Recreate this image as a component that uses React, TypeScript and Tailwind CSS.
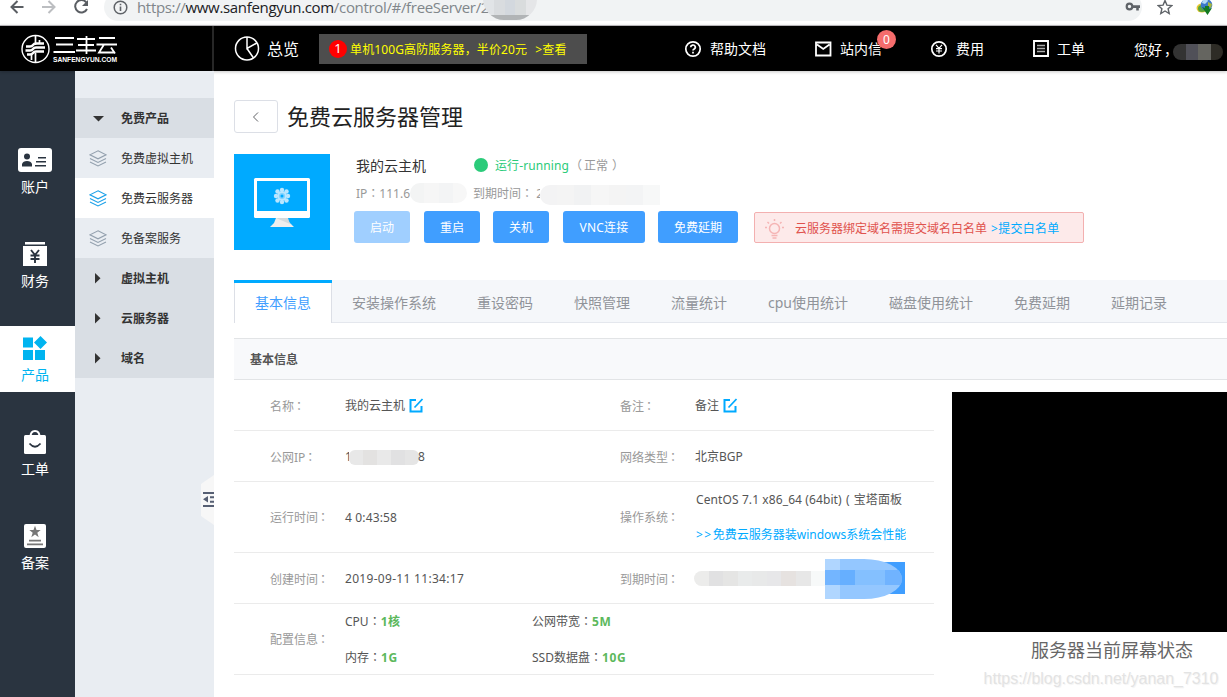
import React from "react";

const Colon = () => <span className="font-['Noto_Sans_CJK_TC',sans-serif]">：</span>;

const Mosaic = ({ cells, className }: { cells: string[]; className: string }) => (
  <span className={"flex overflow-hidden shrink-0 " + className}>
    {cells.map((c, i) => (
      <span key={i} className={"h-full flex-1 " + c} />
    ))}
  </span>
);

function BrowserBar() {
  return (
    <div className="h-[25px] overflow-hidden bg-white flex shrink-0">
      <svg className="w-[104px] h-[25px] shrink-0" viewBox="0 0 104 25" fill="none" strokeWidth="2">
        <path d="M23.500 7H12M17.500 1 11.500 7l6 6" stroke="#5a5e63" />
        <path d="M42 7h12M48.500 1l6 6-6 6" stroke="#bcbec1" />
        <path d="M86.300 2.500A6.200 6.200 0 1 0 87 9" stroke="#5a5e63" />
        <path d="M88 0v6h-6z" fill="#5a5e63" />
      </svg>
      <div className="-mt-[7px] h-[28px] w-[1038px] shrink-0 rounded-full bg-[#f1f3f4] flex items-center relative">
        <svg className="ml-[9px] w-[15px] h-[15px] shrink-0" viewBox="0 0 15 15" fill="none">
          <circle cx="7.500" cy="7.500" r="6.300" stroke="#5f6368" strokeWidth="1.500" />
          <path d="M7.500 6.500v4.500M7.500 3.800v1.500" stroke="#5f6368" strokeWidth="1.600" />
        </svg>
        <span className="ml-[9px] -mt-[1px] font-['Open_Sans',sans-serif] text-[15px] leading-[20px] tracking-[-0.33px] whitespace-nowrap text-[#80868b]">
          https://<span className="text-[#202124]">www.sanfengyun.com</span>/control/#/freeServer/2
        </span>
        <div className="absolute left-[379px] top-[6px] h-[21px] w-[54px] rounded-b-full overflow-hidden flex flex-col">
          <Mosaic className="h-[16px]" cells={["bg-[#e1e4e7]", "bg-[#d9dcdf]", "bg-[#d3d8de]", "bg-[#d9dcdd]", "bg-[#e5e6e8]"]} />
          <span className="h-[5px] bg-[#b1b4b6]" />
        </div>
      </div>
      <div className="-ml-[18px] w-[103px] shrink-0 relative">
        <svg className="absolute left-[1px] -top-[1px] w-[16px] h-[16px]" viewBox="0 0 16 16">
          <circle cx="4.500" cy="7.500" r="2.800" fill="none" stroke="#5f6368" strokeWidth="2.200" />
          <path d="M7 6.300h8v2.600h-1.200v2.600h-2.600V8.900H7z" fill="#5f6368" />
        </svg>
        <svg className="absolute left-[33px] -top-[1px] w-[16px] h-[16px]" viewBox="0 0 16 16">
          <path d="M8 1.500l1.900 4.600 4.900.4-3.700 3.200 1.100 4.800L8 12l-4.200 2.500 1.100-4.800L1.200 6.500l4.900-.4z" fill="none" stroke="#5f6368" strokeWidth="1.400" />
        </svg>
        <svg className="absolute left-[72px] -top-[1px] w-[18px] h-[18px]" viewBox="0 0 18 18">
          <ellipse cx="6" cy="9" rx="5.500" ry="4.500" fill="#e8c832" />
          <ellipse cx="6" cy="9.500" rx="4" ry="3.500" fill="#5aa53a" />
          <circle cx="10.500" cy="6" r="5.800" fill="#3b78c9" />
          <path d="M7 1q4-2 5 1l-3 3-3-1z" fill="#b5d9f4" />
          <path d="M12 3l4 2-1 4-3-2z" fill="#a8b73c" />
          <path d="M6 8l3 1V7h4v3l3-1-4.500 7z" fill="#147a22" />
        </svg>
      </div>
    </div>
  );
}

function Logo() {
  return (
    <svg className="ml-[20px] w-[99px] h-[32px]" viewBox="0 0 99 32" fill="none" stroke="#fff">
      <circle cx="15.500" cy="16" r="13.500" strokeWidth="1.400" />
      <path d="M15.500 3v9M19.500 7v3M11.500 22v5M15.500 20v9" strokeWidth="1.700" />
      <path d="M6 13.500h4q2 0 3-1.500t3-1.500h8M5.500 17.500H10q2 0 3-1.500t3-1.500h9M7 21.500h3q2 0 3-1.500t3-1.500h8" strokeWidth="2.300" />
      <path d="M35 5h19M36 11.500h17M33.500 19h21.500M57 6h18M58 12h16M56 17.500h20M66.500 3v18M79 5h16M76.500 11.500h20.500M84 11.500l-5 8h16M91 14.500l4 6" strokeWidth="1.800" />
      <text x="33" y="29" textLength="64" lengthAdjust="spacingAndGlyphs" fill="#fff" stroke="none" className="font-['Liberation_Sans',sans-serif] text-[7px] font-bold">SANFENGYUN.COM</text>
    </svg>
  );
}

function Header() {
  return (
    <header className="h-[46px] shrink-0 border-t border-[#b5b3b7] bg-black text-white flex items-center whitespace-nowrap shadow-[0_1px_3px_rgba(0,0,0,0.22)] relative text-[14px]">
      <div className="w-[214px] h-full border-r-2 border-[#272727] flex items-center shrink-0">
        <Logo />
      </div>
      <svg className="ml-[20px] w-[26px] h-[26px] shrink-0" viewBox="0 0 26 26" fill="none" stroke="#fff" strokeWidth="1.500">
        <circle cx="13" cy="12.500" r="11.500" />
        <path d="M13 1v11.500l9.800-5.500M13 12.500l6.500 9.500" />
      </svg>
      <span className="ml-[7px] text-[16px]">总览</span>
      <div className="ml-[20px] w-[268px] h-[30px] bg-[#4d4d4d] flex items-center text-[12px] text-[#ff0] shrink-0">
        <span className="ml-[10px] mr-[3px] size-[18px] rounded-full bg-[#f00] text-white flex items-center justify-center text-[13px]">1</span>
        <span className="mt-[2px] tracking-[0.12px]">单机100G高防服务器，半价20元</span>
        <span className="ml-[8px] mt-[2px] tracking-[0.3px]">&gt;查看</span>
      </div>
      <svg className="ml-[97px] w-[18px] h-[18px] shrink-0" viewBox="0 0 18 18" fill="none" stroke="#fff" strokeWidth="1.700">
        <circle cx="9" cy="9" r="7.200" />
        <path d="M6.700 7.200a2.300 2.100 0 1 1 3.500 1.700Q9 9.600 9 10.500M9 11.800v1.600" />
      </svg>
      <span className="ml-[8px] w-[56px]">帮助文档</span>
      <svg className="ml-[49px] w-[17px] h-[16px] shrink-0" viewBox="0 0 17 16" fill="none" stroke="#fff" strokeWidth="1.800">
        <path d="M1 1.500h14.500v13H1zM2 3.500l6.250 4.500 6.250-4.500" />
      </svg>
      <span className="ml-[8px] w-[42px] relative">
        站内信
        <span className="absolute left-[37px] -top-[8px] size-[19px] rounded-full bg-[#f56c6c] text-[12px] leading-[19px] text-center">0</span>
      </span>
      <svg className="ml-[48px] w-[18px] h-[18px] shrink-0" viewBox="0 0 18 18" fill="none" stroke="#fff" strokeWidth="1.700">
        <circle cx="9" cy="9" r="7.200" />
        <path d="M6 4.800l3 3.500 3-3.500M9 8v5.500M6 8.700h6M6 11h6" strokeWidth="1.200" />
      </svg>
      <span className="ml-[8px] w-[28px]">费用</span>
      <svg className="ml-[49px] w-[16px] h-[17px] shrink-0" viewBox="0 0 16 17" fill="none" stroke="#fff">
        <path d="M1 1h14v15H1z" strokeWidth="1.900" />
        <path d="M4 5.500h8M4 8.500h8M4 11.500h8" strokeWidth="1.300" stroke="#aaa" />
      </svg>
      <span className="ml-[8px] w-[28px]">工单</span>
      <span className="ml-[49px] w-[40px] mt-[1px]">您好<span className="relative left-[2px]">，</span></span>
      <Mosaic className="-ml-[1px] mt-[6px] h-[16px] w-[50px] rounded-full" cells={["bg-[#333]", "bg-[#505058]", "bg-[#656560]", "bg-[#2e2c26]"]} />
    </header>
  );
}

const iconAccount = (
  <svg className="w-[34px] h-[24px]" viewBox="0 0 34 24">
    <rect width="34" height="24" rx="3" fill="#fff" />
    <circle cx="9" cy="8.500" r="3" fill="#2a3440" />
    <path d="M4 18.500v-2.500q1-3 5-3t5 3v2.500zM20 9h8v1.600h-8zM18 13h10v1.600H18zM17 17h11v1.600H17z" fill="#2a3440" />
  </svg>
);
const iconFinance = (
  <svg className="w-[24px] h-[24px]" viewBox="0 0 24 24">
    <path d="M2 0h20v2.500H2zM0 4h24v20H0z" fill="#fff" />
    <path d="M8 8l4 5 4-5M12 13v8M7.500 13.500h9M7.500 17h9" stroke="#2a3440" strokeWidth="1.900" fill="none" />
  </svg>
);
const iconProduct = (
  <svg className="w-[24px] h-[24px]" viewBox="0 0 24 24" fill="#00b4f0">
    <path d="M0 1.500h10v10H0zM0 14h10v10H0zM12 14h10v10H12zM17.500 0L24 6.500 17.500 13 11 6.500z" />
  </svg>
);
const iconOrder = (
  <svg className="w-[22px] h-[24px]" viewBox="0 0 22 24" fill="none">
    <path d="M6.500 7q0-6 4.500-6t4.500 6" stroke="#fff" strokeWidth="2" />
    <rect y="5" width="22" height="19" rx="1.500" fill="#fff" />
    <path d="M5.500 13.500q5.500 6.500 11 0" stroke="#2a3440" strokeWidth="1.800" />
  </svg>
);
const iconRecord = (
  <svg className="w-[22px] h-[24px]" viewBox="0 0 22 24" fill="#777">
    <rect width="22" height="24" rx="2" fill="#fff" />
    <path d="M11 1.800l1.500 4.300h4.200L13.300 8.800l1.400 4.500L11 10.600l-3.700 2.700 1.400-4.500-3.400-2.700h4.200zM5 15.800h12v1.700H5zM3 19.500h16v1.700H3z" />
  </svg>
);

const mainNav = [
  { label: "账户", icon: iconAccount, active: false },
  { label: "财务", icon: iconFinance, active: false },
  { label: "产品", icon: iconProduct, active: true },
  { label: "工单", icon: iconOrder, active: false },
  { label: "备案", icon: iconRecord, active: false },
];

function MainNav() {
  return (
    <nav className="w-[75px] shrink-0 bg-[#2a3440] pt-[67px] flex flex-col gap-[28px] text-[14px]">
      {mainNav.map((n) => (
        <div key={n.label} className={"h-[66px] shrink-0 pr-[5px] pt-[10px] flex flex-col items-center " + (n.active ? "bg-white text-[#00b4f0]" : "text-white")}>
          {n.icon}
          <span className="mt-[5px] leading-[20px]">{n.label}</span>
        </div>
      ))}
    </nav>
  );
}

const Layers = ({ color }: { color: string }) => (
  <svg className="w-[18px] h-[17px]" viewBox="0 0 18 17" fill="none" stroke={color} strokeWidth="1.100">
    <path d="M9 .8l8 4-8 4-8-4zM1 8.500l8 4 8-4M1 12l8 4 8-4" />
  </svg>
);

const subNav = [
  { label: "免费产品", kind: "down" },
  { label: "免费虚拟主机", kind: "item" },
  { label: "免费云服务器", kind: "active" },
  { label: "免备案服务", kind: "item" },
  { label: "虚拟主机", kind: "right" },
  { label: "云服务器", kind: "right" },
  { label: "域名", kind: "right" },
];

function SubNav() {
  return (
    <nav className="w-[139px] shrink-0 bg-[#e9edf2] pt-[27px] flex flex-col text-[12px] text-[#333] relative">
      {subNav.map((s) => (
        <div
          key={s.label}
          className={
            "h-[40px] flex items-center whitespace-nowrap " +
            (s.kind === "active" ? "bg-white" : s.kind === "item" ? "" : "bg-[#d9dee4] font-bold")
          }
        >
          <span className="w-[46px] pl-[14px] flex">
            {s.kind === "item" && <Layers color="#93a0ae" />}
            {s.kind === "active" && <Layers color="#1ba0e8" />}
            {s.kind === "down" && (
              <svg className="w-[18px] h-[16px]" viewBox="0 0 18 16"><path d="M4 6h11L9.500 11.500z" fill="#333" /></svg>
            )}
            {s.kind === "right" && (
              <svg className="w-[18px] h-[16px]" viewBox="0 0 18 16"><path d="M6 3v10.500l5.500-5.250z" fill="#333" /></svg>
            )}
          </span>
          <span className="mt-[2px]">{s.label}</span>
        </div>
      ))}
      <svg className="absolute right-0 top-[403px] w-[13px] h-[52px]" viewBox="0 0 13 52">
        <path d="M13 1v50L0 42V10z" fill="#f7f7f7" />
        <path d="M2 18h11v2H2zM2 31h11v2H2zM9 22.300h4v2H9zM9 26.700h4v2H9zM7 22v6.500L2 25.300z" fill="#565f73" />
      </svg>
    </nav>
  );
}

const ServerImage = () => (
  <svg className="w-[96px] h-[96px] shrink-0 bg-[#0af]" viewBox="0 0 96 96">
    <rect x="20" y="24" width="56" height="40" rx="1.500" fill="#fff" />
    <path d="M23 27h50v30H23z" fill="#0af" />
    <path d="M42 64h12v3l3 3 3 3H36l4-4z" fill="#eee" />
    <path d="M42 64h12l2 6z" fill="#d5dadd" />
    <g fill="#b9e6ff">
      <circle cx="48" cy="36" r="2.200" /><circle cx="48" cy="48" r="2.200" />
      <circle cx="42" cy="42" r="2.200" /><circle cx="54" cy="42" r="2.200" />
      <circle cx="43.500" cy="37.500" r="2.200" /><circle cx="52.500" cy="37.500" r="2.200" />
      <circle cx="43.500" cy="46.500" r="2.200" /><circle cx="52.500" cy="46.500" r="2.200" />
      <circle cx="48" cy="42" r="4.800" />
    </g>
    <circle cx="48" cy="42" r="3" fill="#7fd2ff" />
    <circle cx="48" cy="42" r="1.500" fill="#0af" />
  </svg>
);

const btn = "h-[32px] rounded-[3px] text-white flex items-center justify-center shrink-0 pt-[2px] ";

function ServerSummary() {
  return (
    <div className="mt-[21px] h-[96px] flex">
      <ServerImage />
      <div className="ml-[24px] flex flex-col whitespace-nowrap">
        <div className="h-[22px] flex items-center text-[14px] text-[#333]">
          <span className="pl-[2px] w-[120px]">我的云主机</span>
          <span className="size-[14px] rounded-full bg-[#2bcb7a]" />
          <span className="ml-[7px] mt-[2px] text-[12px] tracking-[0.1px] text-[#2bcb7a]">运行-running</span>
          <span className="ml-[3px] mt-[2px] text-[12px] text-[#999]"><span className="relative -left-[2px]">（</span>正常<span className="relative left-[4px]">）</span></span>
        </div>
        <div className="mt-[1px] h-[32px] flex items-center text-[12px] text-[#999]">
          <span className="ml-[2px] mt-px w-[54px] overflow-hidden">IP<Colon />111.6</span>
          <Mosaic className="-mt-[1px] h-[20px] w-[57px] rounded-full" cells={["bg-[#f3f4f4]", "bg-[#f6f6f6]", "bg-[#f3f4f5]", "bg-[#f7f7f7]"]} />
          <span className="ml-[6px] mt-px w-[67px] overflow-hidden">到期时间<Colon />&nbsp;2</span>
          <Mosaic className="mt-[4px] h-[20px] w-[120px] rounded-l-full" cells={["bg-[#f3f3f4]", "bg-[#f4f4f4]", "bg-[#f1f2f3]", "bg-[#f6f6f6]", "bg-[#f4f4f4]", "bg-[#f3f4f5]", "bg-[#f7f8f8]"]} />
        </div>
        <div className="mt-[2px] h-[32px] flex items-center text-[12px]">
          <button className={btn + "w-[56px] bg-[#a0cfff]"}>启动</button>
          <button className={btn + "ml-[14px] w-[56px] bg-[#409eff]"}>重启</button>
          <button className={btn + "ml-[13px] w-[56px] bg-[#409eff]"}>关机</button>
          <button className={btn + "ml-[14px] w-[82px] bg-[#409eff] tracking-[0.2px]"}>VNC连接</button>
          <button className={btn + "ml-[13px] w-[80px] bg-[#409eff]"}>免费延期</button>
          <div className="ml-[16px] mt-[1px] w-[330px] h-[31px] rounded-[2px] border border-[#f3b0b0] bg-[#fdeaea] flex items-center text-[#e0524d]">
            <svg className="ml-[10px] mt-[3px] w-[20px] h-[20px]" viewBox="0 0 20 20" fill="none" stroke="#f5b5b5" strokeWidth="1.500">
              <circle cx="9.500" cy="9.500" r="5" />
              <path d="M9.500 0v2M2.500 3l1.500 1.500M16.500 3L15 4.500M0 8.500h2M17 8.500h2M6.500 16.500h6M7.500 19h4" />
            </svg>
            <span className="ml-[10px] mt-[2px]">云服务器绑定域名需提交域名白名单</span>
            <span className="ml-[4px] mt-[2px] text-[#0af] tracking-[0.25px]">&gt;提交白名单</span>
          </div>
        </div>
      </div>
    </div>
  );
}

const tabs = ["安装操作系统", "重设密码", "快照管理", "流量统计", "cpu使用统计", "磁盘使用统计", "免费延期", "延期记录"];

function Tabs() {
  return (
    <div className="mt-[30px] h-[43px] bg-[#f5f7fa] border-b border-[#e4e7ed] flex text-[14px] text-[#909399] whitespace-nowrap">
      <div className="w-[98px] h-[43px] shrink-0 bg-white border-x border-[#dcdfe6] flex">
        <div className="-mx-px pb-[2px] flex-1 border-t-3 border-[#0af] text-[#409eff] flex items-center justify-center">基本信息</div>
      </div>
      <div className="ml-[20px] mt-[2px] flex items-center gap-[41px]">
        {tabs.map((t) => (
          <span key={t}>{t}</span>
        ))}
      </div>
    </div>
  );
}

const EditIcon = () => (
  <svg className="ml-[4px] w-[15px] h-[15px] inline-block -mt-[2px]" viewBox="0 0 15 15" fill="none" stroke="#0af" strokeWidth="2">
    <path d="M7 2H1.500v11.500h11V8" />
    <path d="M5.500 9.500L13.500 1" strokeWidth="1.800" />
  </svg>
);

const Row = ({ tall, children }: { tall?: boolean; children: React.ReactNode }) => (
  <div className={"border-b border-[#ebebeb] flex items-center whitespace-nowrap " + (tall ? "h-[71px]" : "h-[51px] pt-[2px]")}>{children}</div>
);
const Label = ({ first, text }: { first?: boolean; text: string }) => (
  <span className={"shrink-0 text-[#999] " + (first ? "ml-[36px] w-[75px]" : "w-[76px]")}>{text}<span className="relative -left-[1px]"><Colon /></span></span>
);
const Green = ({ children }: { children: React.ReactNode }) => <b className="text-[#5cb85c] tracking-[0.6px]">{children}</b>;

function Details() {
  return (
    <div className="w-[700px] shrink-0 text-[12px] text-[#555]">
      <Row>
        <Label first text="名称" />
        <span className="w-[275px] flex items-center">我的云主机<EditIcon /></span>
        <Label text="备注" />
        <span className="-ml-px flex items-center">备注<EditIcon /></span>
      </Row>
      <Row>
        <Label first text="公网IP" />
        <span className="w-[275px] flex items-center">
          <span className="w-[4px] overflow-hidden">1</span>
          <Mosaic className="h-[15px] w-[70px] rounded-[6px]" cells={["bg-[#e8e8e8]", "bg-[#e3e2e1]", "bg-[#e9e9e9]", "bg-[#e1e1e2]", "bg-[#e5e5e5]"]} />
          <span className="-ml-[1px]">8</span>
        </span>
        <Label text="网络类型" />
        <span className="-ml-px">北京BGP</span>
      </Row>
      <Row tall>
        <Label first text="运行时间" />
        <span className="w-[275px] mt-px tracking-[0.15px]">4 0:43:58</span>
        <Label text="操作系统" />
        <span className="w-[210px] flex flex-col overflow-hidden leading-[35px]">
          <span className="tracking-[0.1px] -mt-px mb-px">CentOS 7.1 x86_64 (64bit)<span className="inline-block w-[12px] text-center font-['Noto_Sans',sans-serif]">(</span>宝塔面板</span>
          <span className="-mt-px text-[#0af]"><span className="tracking-[1.500px]">&gt;&gt;</span>免费云服务器装windows系统会性能</span>
        </span>
      </Row>
      <Row>
        <Label first text="创建时间" />
        <span className="w-[275px] tracking-[0.300px]">2019-09-11 11:34:17</span>
        <Label text="到期时间" />
        <Mosaic className="-ml-[2px] -mt-[2px] h-[15px] w-[131px] rounded-l-full" cells={["bg-[#ececeb]", "bg-[#e1e1e2]", "bg-[#e5e5e4]", "bg-[#e9ebeb]", "bg-[#e8e9e9]", "bg-[#e7e7e9]", "bg-[#e6e2e0]", "bg-[#e7e7e7]", "bg-[#f7f9f9]"]} />
        <span className="relative w-[80px] h-[40px] flex items-center justify-end">
          <span className="mb-[2px] w-[40px] h-[32px] bg-[#409eff]" />
          <span className="absolute left-0 top-0 w-[77px] h-[40px] rounded-r-[38px_20px] overflow-hidden bg-[#94c7ff] flex">
            <span className="w-[15px] bg-[#b0d6ff]" />
            <span className="absolute left-0 top-[11px] flex w-full h-[15px]">
              <span className="w-[15px] bg-[#73b5ff]" />
              <span className="w-[15px] bg-[#66afff]" />
              <span className="w-[30px] bg-[#84c0ff]" />
              <span className="flex-1 bg-[#70b3ff]" />
            </span>
          </span>
        </span>
      </Row>
      <Row tall>
        <Label first text="配置信息" />
        <span className="-mt-[1px] grid grid-cols-[187px_1fr] leading-[35px]">
          <span>CPU<Colon /><Green>1核</Green></span>
          <span>公网带宽<Colon /><Green>5M</Green></span>
          <span>内存<Colon /><Green>1G</Green></span>
          <span>SSD数据盘<Colon /><Green>10G</Green></span>
        </span>
      </Row>
    </div>
  );
}

export default function App() {
  return (
    <div className="w-[1227px] h-[697px] overflow-hidden flex flex-col bg-white font-['Noto_Sans','Noto_Sans_CJK_SC',sans-serif]">
      <BrowserBar />
      <Header />
      <div className="flex flex-1 min-h-0">
        <MainNav />
        <SubNav />
        <main className="flex-1 min-w-0 pl-[20px] pt-[29px] flex flex-col">
          <div className="h-[33px] shrink-0 flex items-center">
            <button className="w-[44px] h-[33px] rounded-[3px] border border-[#dcdfe6] flex items-center justify-center">
              <svg className="w-[8px] h-[12px]" viewBox="0 0 8 12" fill="none" stroke="#606266"><path d="M6 1.500L1.500 6 6 10.500" /></svg>
            </button>
            <h1 className="ml-[9px] text-[22px] text-[#222] whitespace-nowrap">免费云服务器管理</h1>
          </div>
          <ServerSummary />
          <Tabs />
          <div className="mt-[15px] h-[42px] shrink-0 border-y border-[#e2e4e6] bg-[#f8f9fb] pl-[16px] pt-[2px] flex items-center text-[12px] font-bold text-[#555]">基本信息</div>
          <div className="flex">
            <Details />
            <div className="ml-[18px] mt-[12px] w-[324px] shrink-0 flex flex-col items-center whitespace-nowrap">
              <div className="w-full h-[240px] bg-black" />
              <span className="mr-[4px] mt-[5px] leading-[26px] text-[18px] text-[#666]">服务器当前屏幕状态</span>
              <span className="mr-[26px] mt-[6px] leading-[20px] font-['Liberation_Sans',sans-serif] text-[16px] tracking-[-0.03px] text-[#e3e3e3] [text-shadow:1px_1px_1px_#f3f3f3]">https://blog.csdn.net/yanan_7310</span>
            </div>
          </div>
        </main>
      </div>
    </div>
  );
}
